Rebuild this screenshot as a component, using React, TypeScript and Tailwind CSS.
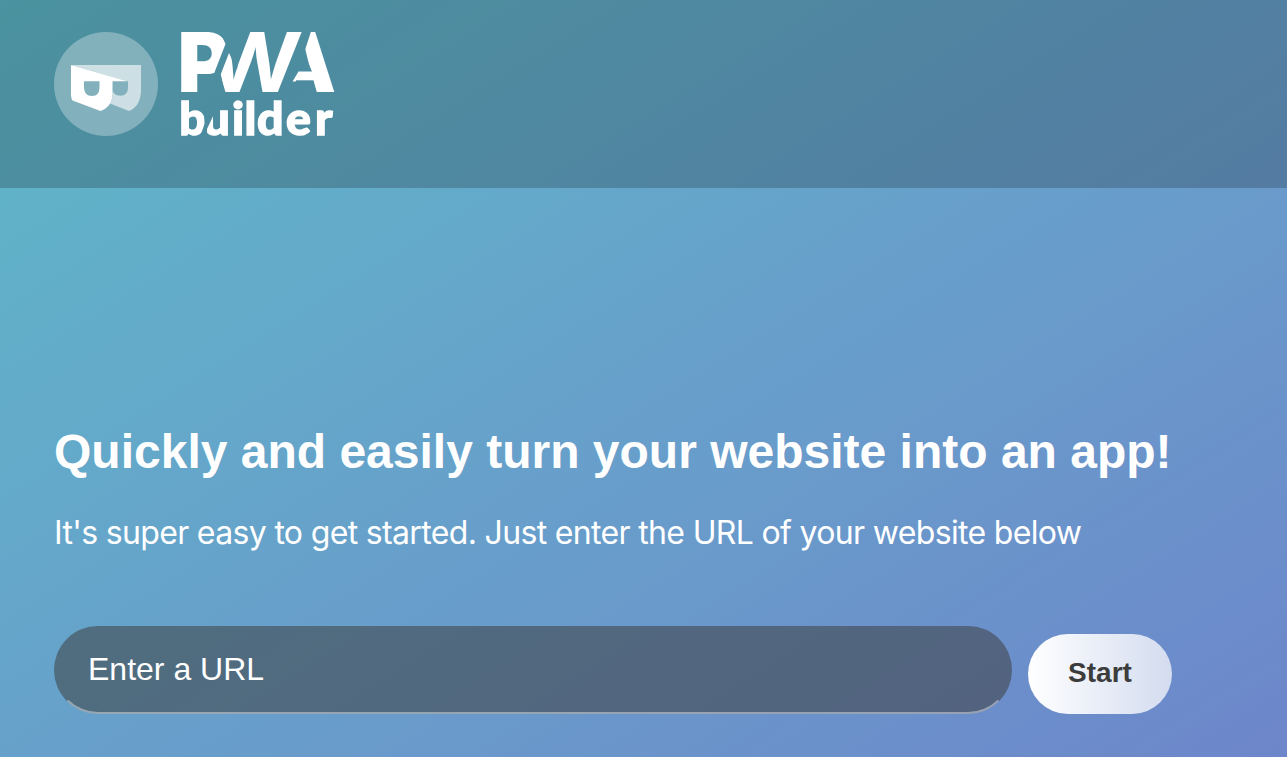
function Emblem() {
  return (
    <svg className="h-[104px] w-[104px] shrink-0" viewBox="0 0 104 104" aria-hidden="true">
      <circle cx="52" cy="52" r="52" fill="#fff" fillOpacity=".3" />
      <path
        fill="#fff"
        fillOpacity=".6"
        fillRule="evenodd"
        d="M17 33H87V58C87 68 83 76 75 79L56 71.5C58 68.500 58.500 66 58.500 62V49.200H73.500L17 33ZM58.500 49.200H74V55C74 61 71 63.700 66.500 63.700C61.500 63.700 58.500 61 58.500 57Z"
      />
      <path
        fill="#fff"
        fillRule="evenodd"
        d="M17 33L73.500 49.200H58.500V62C58.500 71 53 77 46.500 79L18.500 68.500C17.500 67 17 65 17 62ZM30 49.200V54.500C30 61 33 64 38 64C43 64 45.500 61 45.500 55V49.200Z"
      />
    </svg>
  );
}

function Wordmark() {
  return (
    <svg
      className="h-[104px] w-[153px] shrink-0 fill-white font-['Inter'] font-black"
      viewBox="0 0 153 104"
      overflow="visible"
    >
      <defs>
        <clipPath id="cut-p"><path d="M0 -2H38L44.500 12L34 39L28 62H0Z" /></clipPath>
        <clipPath id="cut-w"><path d="M48 21L39.500 43L45 62H150V-2H60L56 38Z" /></clipPath>
        <clipPath id="cut-a"><path d="M130.500 -2L123 21L131 39.500H117.500L111.500 49.500H132L136 62H156V-2Z" /></clipPath>
        <mask id="cut-bu" maskUnits="userSpaceOnUse" x="-10" y="60" width="170" height="50">
          <rect x="-10" y="60" width="170" height="50" fill="#fff" />
          <path d="M23 76H34V80L26 97V106H18.500L23.500 92Z" fill="#000" />
        </mask>
      </defs>
      <g fontSize="82.5">
        <g clipPath="url(#cut-p)"><text x="-3.5" y="60" textLength="53" lengthAdjust="spacingAndGlyphs">P</text></g>
        <g clipPath="url(#cut-w)">
          <text className="font-bold" transform="translate(23.500 60) skewX(-6)" textLength="93" lengthAdjust="spacingAndGlyphs">W</text>
        </g>
        <g clipPath="url(#cut-a)"><text x="93" y="60" textLength="62" lengthAdjust="spacingAndGlyphs">A</text></g>
      </g>
      <g mask="url(#cut-bu)">
        <text className="font-['Lato']" fontSize="46.5" y="103.300" x="-1.800 22.500 51 63.500 76 105 134" stroke="#fff" strokeWidth="1.4">builder</text>
      </g>
    </svg>
  );
}

export default function App() {
  return (
    <div className="flex h-[757px] w-full flex-col overflow-hidden bg-[linear-gradient(148deg,#5eb8c8_0%,#699bcb_62%,#6d86ca_100%)] font-['Liberation_Sans',sans-serif] text-white">
      <header className="flex h-[188px] shrink-0 items-start gap-[23px] bg-black/20 pt-8 pl-[54px]">
        <Emblem />
        <Wordmark />
      </header>
      <main className="flex flex-col items-start pl-[54px] pt-[236px]">
        <h1 className="text-[48px] leading-[56px] font-bold whitespace-nowrap">
          Quickly and easily turn your website into an app!
        </h1>
        <p className="mt-[33px] font-['Inter',sans-serif] text-[32px] leading-10 tracking-[-0.66px] whitespace-nowrap">
          It's super easy to get started. Just enter the URL of your website below
        </p>
        <form className="mt-[73px] flex items-end gap-4" onSubmit={(e) => e.preventDefault()}>
          <input
            type="text"
            aria-label="Enter a URL"
            placeholder="Enter a URL"
            className="h-[88px] w-[958px] rounded-[44px] border-2 border-transparent border-b-white/40 bg-[rgba(60,60,60,0.53)] px-[32px] pb-[2px] text-[32px] text-white outline-none placeholder:text-white"
          />
          <button
            type="submit"
            className="h-20 w-36 rounded-full bg-linear-to-r from-white to-[#d3dcef] pb-0.5 text-[28px] font-bold text-[#3c3c3c]"
          >
            Start
          </button>
        </form>
      </main>
    </div>
  );
}
